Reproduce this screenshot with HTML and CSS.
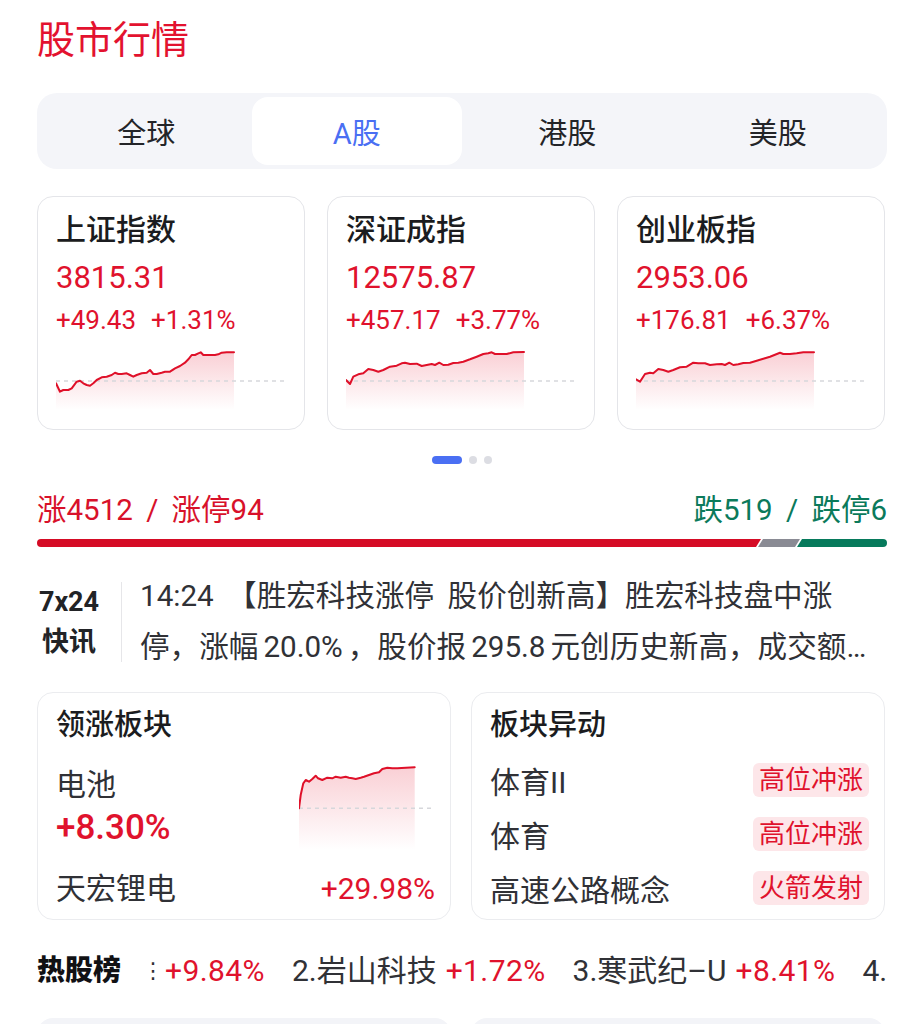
FILE: index.html
```html
<!DOCTYPE html>
<html lang="zh-CN">
<head>
<meta charset="utf-8">
<title>股市行情</title>
<link rel="stylesheet" href="styles.css">
</head>
<body>
<div class="page">
  <h1 class="title">股市行情</h1>

  <div class="tabs">
    <div class="tab">全球</div>
    <div class="tab active">A股</div>
    <div class="tab">港股</div>
    <div class="tab">美股</div>
  </div>

  <div class="index-cards">
    <div class="index-card">
      <div class="ic-title">上证指数</div>
      <div class="ic-value">3815.31</div>
      <div class="ic-change"><span>+49.43</span><span>+1.31%</span></div>
      <svg class="ic-chart" viewBox="0 0 228 60" preserveAspectRatio="none">
        <defs><linearGradient id="g1" x1="0" y1="0" x2="0" y2="1"><stop offset="0" stop-color="#e4132e" stop-opacity="0.2"/><stop offset="1" stop-color="#e4132e" stop-opacity="0"/></linearGradient></defs>
        <polygon fill="url(#g1)" points="0,33.3 4,41.7 7.3,40 12.3,40 15.7,38.3 20.7,31.7 24,30.7 27.3,33.3 30.7,35 34,35.7 37.3,33.3 40.7,30 45.7,27.3 50.7,26.7 55.7,25 59,22.7 62.3,24 65.7,24 70.7,23.3 74,25 77.3,26.7 80.7,25 85.7,23.3 90.7,22.7 94,20 97.3,24 100.7,24 105.7,22.7 109,21.7 114,21.7 119,18.3 124,16 129,12.7 132.3,9.3 135.7,5 139,5 142.3,3.3 144.7,2.3 147.3,5 152.3,5 159,5 162.3,4.3 165.7,2.7 170.7,2.3 178,2.3 178,60 0,60"/>
        <line x1="0" y1="31" x2="228" y2="31" class="baseline"/>
        <polyline class="spark" points="0,33.3 4,41.7 7.3,40 12.3,40 15.7,38.3 20.7,31.7 24,30.7 27.3,33.3 30.7,35 34,35.7 37.3,33.3 40.7,30 45.7,27.3 50.7,26.7 55.7,25 59,22.7 62.3,24 65.7,24 70.7,23.3 74,25 77.3,26.7 80.7,25 85.7,23.3 90.7,22.7 94,20 97.3,24 100.7,24 105.7,22.7 109,21.7 114,21.7 119,18.3 124,16 129,12.7 132.3,9.3 135.7,5 139,5 142.3,3.3 144.7,2.3 147.3,5 152.3,5 159,5 162.3,4.3 165.7,2.7 170.7,2.3 178,2.3"/>
      </svg>
    </div>
    <div class="index-card">
      <div class="ic-title">深证成指</div>
      <div class="ic-value">12575.87</div>
      <div class="ic-change"><span>+457.17</span><span>+3.77%</span></div>
      <svg class="ic-chart" viewBox="0 0 228 60" preserveAspectRatio="none">
        <defs><linearGradient id="g2" x1="0" y1="0" x2="0" y2="1"><stop offset="0" stop-color="#e4132e" stop-opacity="0.2"/><stop offset="1" stop-color="#e4132e" stop-opacity="0"/></linearGradient></defs>
        <polygon fill="url(#g2)" points="0,30 4,34 7.3,26.7 12.3,24.3 17.3,23.3 22.3,19 27.3,20 32.3,21.7 37.3,20 44,16.7 50.7,15.7 55.7,13.3 59,12.7 64,14 70.7,13.7 75.7,16 80.7,15 85.7,14 89,15 93.3,12.7 97.3,15 102.3,14.7 107.3,13 112.3,12.7 117.3,11.7 124,9.3 130.7,6.7 137.3,4 142.3,3.3 145.7,2.3 149,4 155.7,4 160.7,4 167.3,2.3 178,2 178,60 0,60"/>
        <line x1="0" y1="31" x2="228" y2="31" class="baseline"/>
        <polyline class="spark" points="0,30 4,34 7.3,26.7 12.3,24.3 17.3,23.3 22.3,19 27.3,20 32.3,21.7 37.3,20 44,16.7 50.7,15.7 55.7,13.3 59,12.7 64,14 70.7,13.7 75.7,16 80.7,15 85.7,14 89,15 93.3,12.7 97.3,15 102.3,14.7 107.3,13 112.3,12.7 117.3,11.7 124,9.3 130.7,6.7 137.3,4 142.3,3.3 145.7,2.3 149,4 155.7,4 160.7,4 167.3,2.3 178,2"/>
      </svg>
    </div>
    <div class="index-card">
      <div class="ic-title">创业板指</div>
      <div class="ic-value">2953.06</div>
      <div class="ic-change"><span>+176.81</span><span>+6.37%</span></div>
      <svg class="ic-chart" viewBox="0 0 228 60" preserveAspectRatio="none">
        <defs><linearGradient id="g3" x1="0" y1="0" x2="0" y2="1"><stop offset="0" stop-color="#e4132e" stop-opacity="0.2"/><stop offset="1" stop-color="#e4132e" stop-opacity="0"/></linearGradient></defs>
        <polygon fill="url(#g3)" points="0,29.3 4,31.7 9,24 14,22.7 17.3,23.3 22.3,19 27.3,20 32.3,21.7 37.3,20 44,17.3 50.7,16.7 57.3,12.7 62.3,13.3 69,13.3 74,15 80.7,14.3 85.7,14 89,15 93.3,12.7 97.3,15 102.3,14.3 107.3,13 114,12.7 120.7,10.7 127.3,8.7 134,6.7 139,4.7 144,2.7 147.3,4 154,4 160.7,3.3 167.3,2.3 178,2.3 178,60 0,60"/>
        <line x1="0" y1="31" x2="228" y2="31" class="baseline"/>
        <polyline class="spark" points="0,29.3 4,31.7 9,24 14,22.7 17.3,23.3 22.3,19 27.3,20 32.3,21.7 37.3,20 44,17.3 50.7,16.7 57.3,12.7 62.3,13.3 69,13.3 74,15 80.7,14.3 85.7,14 89,15 93.3,12.7 97.3,15 102.3,14.3 107.3,13 114,12.7 120.7,10.7 127.3,8.7 134,6.7 139,4.7 144,2.7 147.3,4 154,4 160.7,3.3 167.3,2.3 178,2.3"/>
      </svg>
    </div>
  </div>

  <div class="dots">
    <span class="dot active"></span>
    <span class="dot"></span>
    <span class="dot"></span>
  </div>

  <div class="breadth-labels">
    <span class="up-text">涨4512 / 涨停94</span>
    <span class="down-text">跌519 / 跌停6</span>
  </div>
  <div class="bar">
    <span class="seg seg-up"></span>
    <span class="seg seg-flat"></span>
    <span class="seg seg-down"></span>
  </div>

  <div class="news">
    <div class="news-label">7x24<br>快讯</div>
    <div class="news-divider"></div>
    <div class="news-text">14:24 【胜宏科技涨停 股价创新高】胜宏科技盘中涨停，涨幅<span class="lat">20.0%</span>，股价报<span class="lat">295.8</span>元创历史新高，成交额超百亿元，总市值突破2500亿元。</div>
  </div>

  <div class="sectors">
    <div class="sector-card">
      <div class="sc-title">领涨板块</div>
      <div class="lead-body">
        <div class="lead-info">
          <div class="lead-name">电池</div>
          <div class="lead-pct">+8.30%</div>
        </div>
        <svg class="lead-chart" viewBox="0 0 134 85" preserveAspectRatio="none">
          <defs><linearGradient id="g4" x1="0" y1="0" x2="0" y2="1"><stop offset="0" stop-color="#e4132e" stop-opacity="0.2"/><stop offset="1" stop-color="#e4132e" stop-opacity="0"/></linearGradient></defs>
          <polygon fill="url(#g4)" points="0,43.3 1.7,30 4.3,18.3 6.7,15 10,16.7 13.3,14 16.7,10.7 19,13.3 23.3,15 28.3,12.7 33.3,13.3 36.7,11.7 41.7,12.7 46.7,11.7 50,12.7 53.3,13.3 56.7,14 61.7,12.7 65,11.7 70,10 75,8.3 80,7.3 83.3,4 88.3,2.7 93.3,3.3 98.3,3.3 115.7,2.3 115.7,85 0,85"/>
          <line x1="0" y1="43.3" x2="134" y2="43.3" class="baseline"/>
          <polyline class="spark" points="0,43.3 1.7,30 4.3,18.3 6.7,15 10,16.7 13.3,14 16.7,10.7 19,13.3 23.3,15 28.3,12.7 33.3,13.3 36.7,11.7 41.7,12.7 46.7,11.7 50,12.7 53.3,13.3 56.7,14 61.7,12.7 65,11.7 70,10 75,8.3 80,7.3 83.3,4 88.3,2.7 93.3,3.3 98.3,3.3 115.7,2.3"/>
        </svg>
      </div>
      <div class="lead-stock">
        <span class="stock-name">天宏锂电</span>
        <span class="up-num">+29.98%</span>
      </div>
    </div>
    <div class="sector-card">
      <div class="sc-title">板块异动</div>
      <div class="alert-list">
        <div class="alert-row"><span class="alert-name">体育II</span><span class="tag">高位冲涨</span></div>
        <div class="alert-row"><span class="alert-name">体育</span><span class="tag">高位冲涨</span></div>
        <div class="alert-row"><span class="alert-name">高速公路概念</span><span class="tag">火箭发射</span></div>
      </div>
    </div>
  </div>

  <div class="hot">
    <div class="hot-title">热股榜</div>
    <div class="ticker">
      <div class="ticker-track">
        <span class="hot-item"><span class="hot-clip">⋮</span><span class="up-num">+9.84%</span></span>
        <span class="hot-item"><span>2.岩山科技</span><span class="up-num">+1.72%</span></span>
        <span class="hot-item"><span>3.寒武纪–U</span><span class="up-num">+8.41%</span></span>
        <span class="hot-item"><span>4.中际旭创</span><span class="up-num">+3.25%</span></span>
      </div>
    </div>
  </div>

  <div class="next-cards">
    <div class="next-card"></div>
    <div class="next-card"></div>
  </div>
</div>
</body>
</html>
```

FILE: styles.css
```css
* {
  box-sizing: border-box;
  margin: 0;
  padding: 0;
}

html, body {
  background: #ffffff;
}

body {
  font-family: Roboto, "Noto Sans CJK SC", "Noto Sans", sans-serif;
  color: #222326;
}

.page {
  width: 924px;
  height: 1024px;
  overflow: hidden;
  padding: 14px 37px 0 37px;
}

.title {
  font-size: 38px;
  line-height: 52px;
  font-weight: 400;
  color: #e3122f;
}

/* tabs */
.tabs {
  margin-top: 27px;
  height: 76px;
  display: flex;
  padding: 4px;
  background: #f4f5f9;
  border-radius: 20px;
}

.tab {
  flex: 1;
  display: flex;
  align-items: center;
  justify-content: center;
  font-size: 29px;
  color: #232428;
  border-radius: 16px;
}

.tab.active {
  background: #ffffff;
  color: #4a6ff3;
}

/* index cards */
.index-cards {
  margin-top: 27px;
  margin-right: 2px;
  display: grid;
  grid-template-columns: repeat(3, 1fr);
  gap: 22px;
}

.index-card {
  border: 1px solid #e4e5e9;
  border-radius: 16px;
  padding: 13px 20px 19px 18px;
  display: flex;
  flex-direction: column;
}

.ic-title {
  font-size: 30px;
  line-height: 40px;
  font-weight: 500;
  color: #1b1c20;
}

.ic-value {
  margin-top: 8px;
  font-size: 31px;
  line-height: 40px;
  color: #e0122d;
}

.ic-change {
  margin-top: 4px;
  font-size: 26px;
  line-height: 36px;
  color: #e0122d;
  display: flex;
  gap: 15px;
}

.ic-chart {
  margin-top: 12px;
  width: 100%;
  height: 60px;
  display: block;
}

.spark {
  fill: none;
  stroke: #df1029;
  stroke-width: 2;
  stroke-linejoin: round;
  stroke-linecap: round;
}

.baseline {
  stroke: #d6d7db;
  stroke-width: 1.5;
  stroke-dasharray: 4 4;
}

/* dots */
.dots {
  margin-top: 26px;
  display: flex;
  justify-content: center;
  gap: 7px;
}

.dot {
  width: 8px;
  height: 8px;
  border-radius: 4px;
  background: #dcdde3;
}

.dot.active {
  width: 30px;
  background: #4a6ff3;
}

/* breadth */
.breadth-labels {
  margin-top: 28px;
  display: flex;
  justify-content: space-between;
  font-size: 29.5px;
  line-height: 36px;
  word-spacing: 6px;
}

.up-text {
  color: #d8112a;
}

.down-text {
  color: #0b7a5b;
}

.bar {
  margin-top: 11px;
  height: 8px;
  display: flex;
}

.seg {
  display: block;
  height: 8px;
}

.seg-up {
  flex: 1;
  background: #d50b25;
  border-radius: 4px 0 0 4px;
  clip-path: polygon(0 0, 100% 0, calc(100% - 5px) 100%, 0 100%);
}

.seg-flat {
  width: 42px;
  margin-left: -3px;
  background: #8a8b94;
  clip-path: polygon(5px 0, 100% 0, calc(100% - 5px) 100%, 0 100%);
}

.seg-down {
  width: 90px;
  margin-left: -3px;
  background: #077a5c;
  border-radius: 0 4px 4px 0;
  clip-path: polygon(5px 0, 100% 0, 100% 100%, 0 100%);
}

/* news */
.news {
  margin-top: 24px;
  display: flex;
  align-items: center;
}

.news-label {
  width: 64px;
  flex: none;
  text-align: center;
  font-size: 27px;
  line-height: 40px;
  font-weight: 700;
  color: #222326;
}

.news-divider {
  flex: none;
  width: 1px;
  height: 80px;
  background: #e6e6e9;
  margin: 0 18px 0 20px;
}

.news-text {
  flex: 1;
  font-size: 29.6px;
  line-height: 51px;
  word-spacing: 6px;
  color: #303136;
  display: -webkit-box;
  -webkit-line-clamp: 2;
  -webkit-box-orient: vertical;
  overflow: hidden;
}

.lat {
  margin: 0 5px;
}

/* sector cards */
.sectors {
  margin-top: 19px;
  margin-right: 2px;
  display: grid;
  grid-template-columns: 1fr 1fr;
  gap: 20px;
}

.sector-card {
  height: 228px;
  border: 1px solid #ebecef;
  border-radius: 16px;
  padding: 12px 15px 0 18px;
}

.sc-title {
  font-size: 29px;
  line-height: 40px;
  font-weight: 500;
  color: #1b1c20;
}

.lead-body {
  margin-top: 20px;
  display: flex;
  justify-content: space-between;
  align-items: flex-start;
}

.lead-name {
  font-size: 30px;
  line-height: 40px;
  color: #303136;
}

.lead-pct {
  font-size: 35px;
  line-height: 46px;
  font-weight: 500;
  color: #e0122d;
}

.lead-chart {
  width: 134px;
  height: 85px;
  display: block;
  margin-right: 2px;
}

.lead-stock {
  margin-top: 18px;
  display: flex;
  justify-content: space-between;
  font-size: 30px;
  line-height: 40px;
}

.stock-name {
  color: #303136;
}

.up-num {
  color: #e0122d;
}

.alert-list {
  margin-top: 15px;
  display: flex;
  flex-direction: column;
  gap: 14px;
}

.alert-row {
  height: 40px;
  display: flex;
  justify-content: space-between;
  align-items: center;
}

.alert-name {
  font-size: 30px;
  color: #303136;
}

.tag {
  font-size: 26px;
  line-height: 34px;
  padding: 0 6px;
  background: #fde6e9;
  color: #e0122d;
  border-radius: 6px;
}

/* hot list */
.hot {
  margin-top: 31px;
  display: flex;
  align-items: center;
  line-height: 40px;
}

.hot-title {
  flex: none;
  width: 113px;
  font-size: 28px;
  font-weight: 900;
  color: #111114;
}

.ticker {
  flex: 1;
  overflow: hidden;
  white-space: nowrap;
  margin-right: -2px;
}

.ticker-track {
  display: flex;
  gap: 27px;
  font-size: 30px;
  color: #303136;
}

.hot-item {
  display: flex;
  gap: 9px;
  flex: none;
}

.hot-item .up-num {
  letter-spacing: 0.4px;
}

.hot-clip {
  font-family: "DejaVu Sans", sans-serif;
  font-size: 22px;
  color: #303136;
  margin-left: -8px;
  margin-right: -8px;
}

/* next cards */
.next-cards {
  margin-top: 27px;
  margin-right: 2px;
  display: grid;
  grid-template-columns: 1fr 1fr;
  gap: 20px;
}

.next-card {
  height: 60px;
  background: #f3f4f8;
  border-radius: 16px;
}
```
